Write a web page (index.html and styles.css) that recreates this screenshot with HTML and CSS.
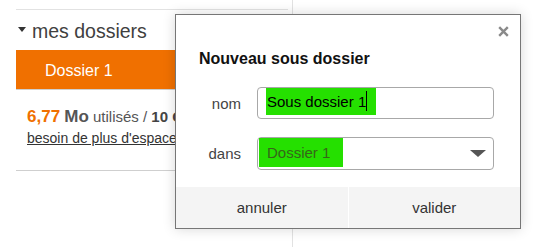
FILE: index.html
```html
<!DOCTYPE html>
<html lang="fr">
<head>
<meta charset="utf-8">
<title>Nouveau sous dossier</title>
<link rel="stylesheet" href="styles.css">
</head>
<body>
<div class="page">
  <aside class="sidebar">
    <div class="side-head">
      <span class="caret-down"></span>
      <span class="side-title">mes dossiers</span>
    </div>
    <div class="folder-item">Dossier 1</div>
    <div class="quota">
      <div class="quota-line"><b class="used">6,77</b> <b class="unit">Mo</b> utilisés / <b>10 Go</b></div>
      <a class="more-space" href="#">besoin de plus d'espace ?</a>
    </div>
  </aside>
  <main class="content"></main>
</div>

<div class="dialog">
  <div class="dlg-close-row">
    <svg class="dlg-close" width="11" height="11" viewBox="0 0 11 11"><path d="M1.2 1.2 L9.8 9.8 M9.8 1.2 L1.2 9.8" stroke="#8a8a8a" stroke-width="2.4" stroke-linecap="butt"/></svg>
  </div>
  <div class="dlg-title">Nouveau sous dossier</div>
  <div class="dlg-form">
    <div class="row">
      <label class="lbl">nom</label>
      <div class="field input-field"><span class="hl-input">Sous dossier 1<span class="text-caret"></span></span></div>
    </div>
    <div class="row row-select">
      <label class="lbl">dans</label>
      <div class="field select-field"><span class="hl-select">Dossier 1</span><span class="sel-arrow"></span></div>
    </div>
  </div>
  <div class="dlg-foot">
    <div class="btn">annuler</div>
    <div class="btn">valider</div>
  </div>
</div>
</body>
</html>
```
FILE: styles.css
```css
html, body {
  margin: 0;
  padding: 0;
  background: #fff;
  font-family: "Liberation Sans", Arial, sans-serif;
  overflow: hidden;
}
.page {
  display: flex;
  height: 247px;
}
.sidebar {
  margin-left: 16px;
  width: 272px;
  margin-top: 9px;
  border-top: 1px solid #e2e2e2;
  align-self: flex-start;
}
.side-head {
  height: 37px;
  padding-top: 3px;
  display: flex;
  align-items: center;
  padding-left: 2px;
  gap: 6px;
  color: #3f3f3f;
}
.caret-down {
  width: 0;
  height: 0;
  border-left: 4.5px solid transparent;
  border-right: 4.5px solid transparent;
  border-top: 5px solid #333;
  margin-top: -4px;
}
.side-title {
  font-size: 19.5px;
  line-height: 23px;
}
.folder-item {
  background: #f07000;
  color: #fff;
  font-size: 16px;
  height: 36px;
  line-height: 36px;
  padding-top: 3px;
  padding-left: 29px;
  border-bottom: 1px solid #cfcfcf;
}
.quota {
  padding: 16px 0 22px 11px;
  border-bottom: 1px solid #cfcfcf;
  color: #555;
  white-space: nowrap;
  overflow: hidden;
}
.quota-line {
  font-size: 15px;
  line-height: 22px;
}
.quota-line b { color: #444; }
.quota-line .used { color: #f07000; font-size: 17px; }
.quota-line .unit { color: #555; font-size: 17px; }
.more-space {
  display: block;
  font-size: 14px;
  line-height: 20px;
  color: #333;
  text-decoration: underline;
}
.content {
  margin-left: 4px;
  border-left: 1px solid #e2e2e2;
  flex: 1;
}

.dialog {
  position: absolute;
  left: 175px;
  top: 14px;
  width: 344px;
  height: 213px;
  border: 1px solid #767676;
  background: #fff;
  box-shadow: 0 0 12px rgba(0,0,0,0.16);
  display: flex;
  flex-direction: column;
}
.dlg-close-row {
  display: flex;
  justify-content: flex-end;
  padding: 11px 11px 0 0;
  height: 11px;
}
.dlg-close { display: block; }
.dlg-title {
  margin: 12px 0 0 23px;
  font-size: 16px;
  font-weight: bold;
  line-height: 20px;
  color: #111;
}
.dlg-form {
  margin-top: 18px;
  display: flex;
  flex-direction: column;
  gap: 18px;
}
.row {
  display: flex;
  align-items: center;
  gap: 16px;
}
.lbl {
  width: 65px;
  text-align: right;
  font-size: 15px;
  color: #444;
}
.field {
  box-sizing: border-box;
  width: 237px;
  border: 1px solid #a8a8a8;
  border-radius: 4px;
  background: #fff;
  font-size: 15px;
}
.input-field {
  height: 32px;
  padding-left: 8px;
}
.hl-input {
  display: inline-block;
  height: 27px;
  line-height: 27px;
  background: #25e000;
  color: #000;
  padding: 0 9px 0 1px;
  vertical-align: top;
}
.text-caret {
  display: inline-block;
  width: 1px;
  height: 20px;
  background: #000;
  vertical-align: -4px;
  margin-left: 0;
}
.select-field {
  height: 33px;
  display: flex;
  align-items: flex-start;
  justify-content: space-between;
  padding: 0 7px 0 1px;
}
.hl-select {
  display: inline-block;
  height: 29px;
  line-height: 29px;
  width: 76px;
  padding-left: 8px;
  background: #25e000;
  color: #36661a;
}
.sel-arrow {
  width: 0;
  height: 0;
  border-left: 8.5px solid transparent;
  border-right: 8.5px solid transparent;
  border-top: 7px solid #555;
  margin-top: 12px;
}
.dlg-foot {
  margin-top: auto;
  height: 41px;
  display: grid;
  grid-template-columns: 1fr 1fr;
  gap: 1px;
  background: #fff;
}
.btn {
  background: #f4f4f4;
  display: flex;
  align-items: center;
  justify-content: center;
  font-size: 15px;
  color: #333;
}
```
